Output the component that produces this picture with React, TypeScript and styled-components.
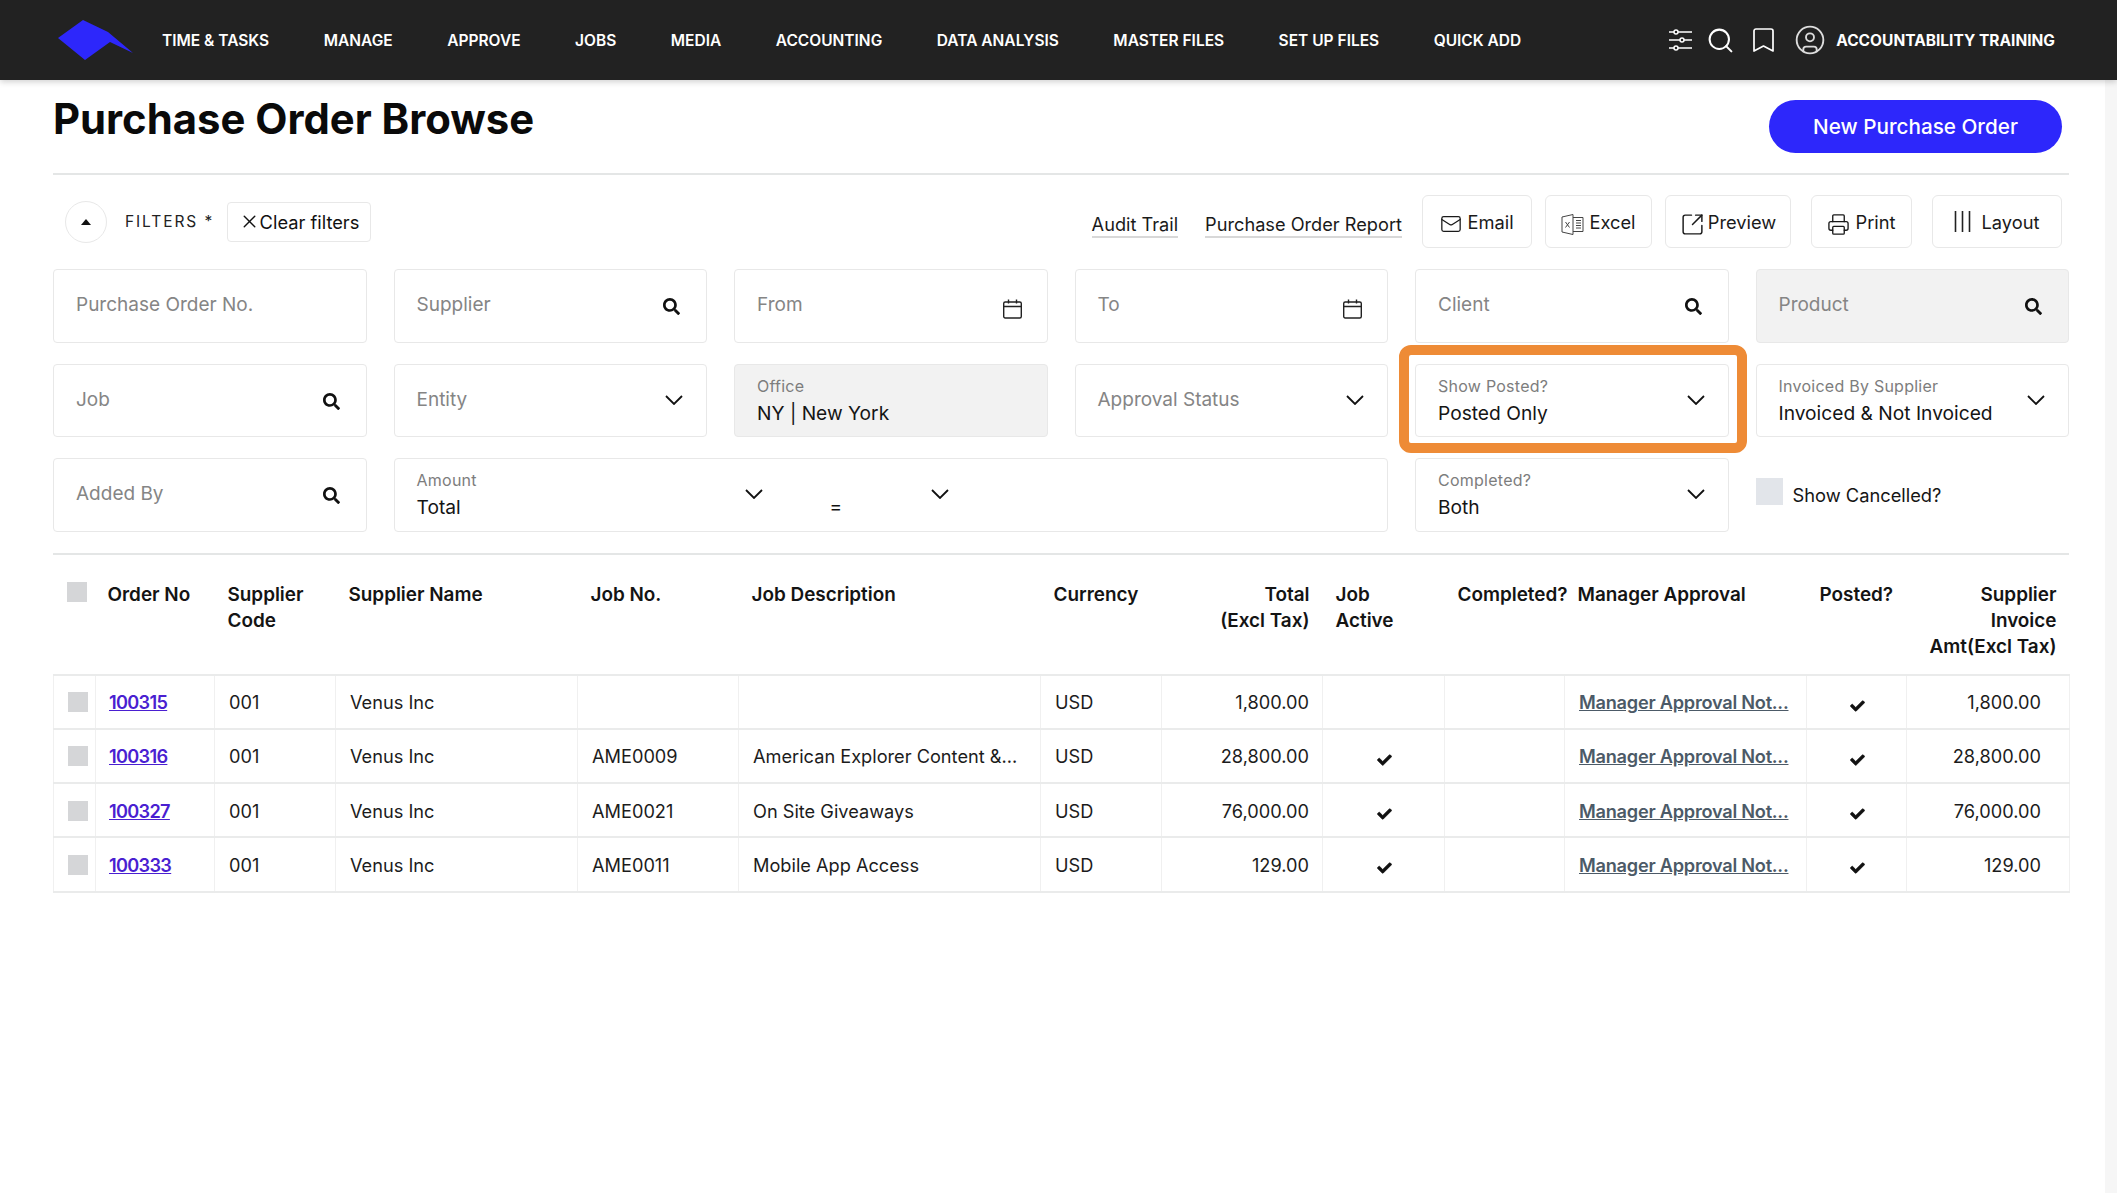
import React from "react";
import { CircleUser, Mail, Printer, Search, SquareArrowOutUpRight, X } from "lucide-react";
import { FaCheck, FaSearch } from "react-icons/fa";
import styled, { createGlobalStyle } from "styled-components";

const NAV_ITEMS = [
  "TIME & TASKS",
  "MANAGE",
  "APPROVE",
  "JOBS",
  "MEDIA",
  "ACCOUNTING",
  "DATA ANALYSIS",
  "MASTER FILES",
  "SET UP FILES",
  "QUICK ADD",
];

const COLUMNS = [
  { width: 42, label: "" },
  { width: 119, label: "Order No" },
  { width: 121, label: "Supplier\nCode" },
  { width: 242, label: "Supplier Name" },
  { width: 161, label: "Job No." },
  { width: 302, label: "Job Description" },
  { width: 121, label: "Currency" },
  { width: 161, label: "Total\n(Excl Tax)", right: true },
  { width: 122, label: "Job\nActive" },
  { width: 120, label: "Completed?" },
  { width: 242, label: "Manager Approval" },
  { width: 100, label: "Posted?" },
  { width: 163, label: "Supplier\nInvoice\nAmt(Excl Tax)", right: true },
];

const ROWS = [
  { no: "100315", job: "", desc: "", total: "1,800.00", active: false },
  { no: "100316", job: "AME0009", desc: "American Explorer Content &...", total: "28,800.00", active: true },
  { no: "100327", job: "AME0021", desc: "On Site Giveaways", total: "76,000.00", active: true },
  { no: "100333", job: "AME0011", desc: "Mobile App Access", total: "129.00", active: true },
];

const GlobalStyle = createGlobalStyle`
  html, body {
    margin: 0;
    padding: 0;
    background: #fff;
    overflow: hidden;
  }
  body {
    font-family: "Inter", "Liberation Sans", sans-serif;
    color: #111;
  }
`;

const Page = styled.div`
  width: 2117px;
  height: 1193px;
  display: flex;
  flex-direction: column;
`;

const TopBar = styled.header`
  height: 80px;
  flex: none;
  display: flex;
  align-items: center;
  padding: 0 62px 0 58px;
  background: #222222;
  box-shadow: 0 2px 6px rgba(0, 0, 0, 0.18);
  position: relative;
  z-index: 2;
`;

const Logo = styled.svg`
  width: 75px;
  height: 40px;
  margin-right: 29px;
  flex: none;
`;

const NavList = styled.nav`
  display: flex;
  gap: 54.5px;
  flex: 1;
`;

const NavItem = styled.a`
  color: #fff;
  font-size: 15.5px;
  font-weight: 600;
  white-space: nowrap;
`;

const NavTools = styled.div`
  display: flex;
  align-items: center;
  color: #fff;
`;

const ToolIcon = styled.span<{ $gap: number }>`
  display: flex;
  margin-right: ${(p) => p.$gap}px;
`;

const UserName = styled.span`
  color: #fff;
  font-size: 15.5px;
  font-weight: 700;
  white-space: nowrap;
`;

const Body = styled.div`
  flex: 1;
  display: flex;
  min-height: 0;
`;

const Main = styled.main`
  flex: 1;
  padding: 0 36px 0 53px;
  min-width: 0;
`;

const Rail = styled.div`
  width: 12px;
  background: #f6f6f6;
`;

const TitleRow = styled.div`
  height: 73px;
  padding: 20px 7px 0 0;
  display: flex;
  justify-content: space-between;
  align-items: flex-start;
  border-bottom: 2px solid #e4e6e6;
`;

const Title = styled.h1`
  margin: 0;
  font-size: 41.8px;
  line-height: 38px;
  font-weight: 700;
  color: #0a0a0a;
`;

const PrimaryButton = styled.button`
  width: 293px;
  height: 53px;
  border: 0;
  border-radius: 27px;
  background: #2d27fb;
  color: #fff;
  font: 500 20.7px "Inter", sans-serif;
`;

const Toolbar = styled.div`
  display: flex;
  align-items: center;
  justify-content: space-between;
  height: 53px;
  margin: 20px 7px 21px 0;
`;

const FilterGroup = styled.div`
  display: flex;
  align-items: center;
  padding-left: 12px;
`;

const CollapseButton = styled.span`
  width: 42px;
  height: 42px;
  box-sizing: border-box;
  border: 1px solid #e8e8e8;
  border-radius: 50%;
  display: flex;
  align-items: center;
  justify-content: center;
  margin-right: 18px;
  &::before {
    content: "";
    border-left: 5px solid transparent;
    border-right: 5px solid transparent;
    border-bottom: 6px solid #111;
  }
`;

const FiltersLabel = styled.span`
  width: 102px;
  font-size: 15.5px;
  letter-spacing: 1.9px;
  color: #222;
  white-space: nowrap;
`;

const ClearButton = styled.span`
  height: 40px;
  width: 144px;
  box-sizing: border-box;
  border: 1px solid #e8e8e8;
  border-radius: 4px;
  display: flex;
  align-items: center;
  justify-content: center;
  font-size: 18.3px;
  white-space: nowrap;
`;

const Actions = styled.div`
  display: flex;
  align-items: center;
`;

const TextLink = styled.a<{ $gap: number }>`
  font-size: 18.2px;
  line-height: 24px;
  border-bottom: 2px solid #d8d8d8;
  margin: 6px ${(p) => p.$gap}px 0 0;
  white-space: nowrap;
  color: #1a1a1a;
`;

const ActionButton = styled.span<{ $width: number; $gap: number; $iconGap?: number }>`
  width: ${(p) => p.$width}px;
  margin-right: ${(p) => p.$gap}px;
  height: 53px;
  box-sizing: border-box;
  border: 1px solid #e8e8e8;
  border-radius: 6px;
  display: flex;
  align-items: center;
  justify-content: center;
  gap: ${(p) => p.$iconGap ?? 5}px;
  font-size: 18.3px;
  color: #1a1a1a;
`;

const ActionIcon = styled.span`
  display: flex;
  margin-top: 5px;
`;

const FilterGrid = styled.div`
  display: grid;
  grid-template-columns: repeat(6, 313.5px);
  column-gap: 27px;
  grid-auto-rows: 73.5px;
  row-gap: 21px;
`;

const Field = styled.div<{ $grey?: boolean; $span?: number }>`
  position: relative;
  box-sizing: border-box;
  border: 1px solid #e8e8e8;
  border-radius: 4px;
  padding: 0 22px;
  background: ${(p) => (p.$grey ? "#f2f2f2" : "#fff")};
  grid-column: ${(p) => (p.$span ? `span ${p.$span}` : "auto")};
  display: flex;
  align-items: flex-start;
  justify-content: space-between;
`;

const Placeholder = styled.span`
  font-size: 19px;
  line-height: 24px;
  margin-top: 23px;
  color: #858585;
  white-space: nowrap;
`;

const FieldText = styled.span`
  display: flex;
  flex-direction: column;
  padding-top: 12px;
`;

const FieldLabel = styled.span`
  font-size: 16px;
  line-height: 18px;
  letter-spacing: 0.25px;
  color: #7d7d7d;
  white-space: nowrap;
`;

const FieldValue = styled.span`
  font-size: 19.2px;
  line-height: 24px;
  margin-top: 6px;
  color: #151515;
  white-space: nowrap;
`;

const FieldIcon = styled.span<{ $kind: "search" | "calendar" | "chevron" }>`
  display: flex;
  flex: none;
  color: #111;
  margin-top: ${(p) => (p.$kind === "chevron" ? 30 : p.$kind === "search" ? 28 : 29)}px;
  margin-right: ${(p) => (p.$kind === "search" ? 4 : p.$kind === "calendar" ? 3 : 1)}px;
`;

const AmountGroup = styled.div`
  display: flex;
  align-items: flex-start;
`;

const AmountMain = styled.div`
  width: 347px;
  display: flex;
  justify-content: space-between;
`;

const AmountOp = styled.div`
  display: flex;
  justify-content: space-between;
  width: 120px;
  margin-left: 66px;
`;

const OpValue = styled.span`
  font-size: 19px;
  line-height: 24px;
  margin-top: 36px;
`;

const Highlight = styled.span`
  position: absolute;
  top: -20px;
  bottom: -17px;
  left: -17px;
  right: -19px;
  border: 10px solid #ee8b36;
  border-radius: 12px;
  pointer-events: none;
`;

const CheckField = styled.label`
  display: flex;
  align-items: center;
  font-size: 18.3px;
  color: #151515;
  gap: 10px;
  height: 74px;
`;

const CheckBox = styled.span<{ $color?: string; $size?: number; $lift?: number }>`
  display: block;
  flex: none;
  width: ${(p) => p.$size ?? 20}px;
  height: ${(p) => p.$size ?? 20}px;
  margin-top: ${(p) => -(p.$lift ?? 0)}px;
  background: ${(p) => p.$color ?? "#d5d6d8"};
`;

const Divider = styled.div`
  height: 2px;
  background: #e4e6e6;
  margin-top: 21px;
`;

const Table = styled.table`
  table-layout: fixed;
  width: 2016px;
  border-collapse: collapse;
`;

const HeadCell = styled.th<{ $right?: boolean }>`
  height: 120px;
  box-sizing: border-box;
  padding: 27px 13px 0 13px;
  vertical-align: top;
  text-align: ${(p) => (p.$right ? "right" : "left")};
  font-size: 18.9px;
  line-height: 26px;
  font-weight: 600;
  color: #141414;
  white-space: pre-line;
  &:nth-child(2) {
    padding-left: 12px;
    padding-right: 0;
  }
  &:nth-child(10) {
    padding-right: 0;
    white-space: nowrap;
  }
  &:nth-child(11) {
    white-space: nowrap;
  }
`;

const Row = styled.tr`
  height: 54.25px;
`;

const Cell = styled.td<{ $right?: boolean; $center?: boolean; $inset?: number; $start?: number }>`
  box-sizing: border-box;
  border: 1px solid #f0f0f0;
  border-top: 2px solid #eaebeb;
  border-bottom: 2px solid #eaebeb;
  padding: 1px ${(p) => p.$inset ?? 13}px 0 ${(p) => p.$start ?? 14}px;
  font-size: 18.2px;
  color: #1c1c1c;
  text-align: ${(p) => (p.$right ? "right" : p.$center ? "center" : "left")};
  white-space: nowrap;
`;

const OrderLink = styled.a`
  color: #4a1fd1;
  font-weight: 600;
  letter-spacing: -0.7px;
  text-decoration: underline;
`;

const ApprovalLink = styled.a`
  color: #4c5a67;
  font-weight: 600;
  letter-spacing: -0.25px;
  text-decoration: underline;
`;

const Tick = styled(FaCheck)`
  display: block;
  margin: 7px auto 0;
  width: 15px;
  height: 14px;
  color: #111;
  stroke: #111;
  stroke-width: 30px;
`;

const SlidersIcon = () => (
  <svg width="23" height="22" viewBox="0 0 23 22" fill="none" stroke="#fff" strokeWidth="1.5">
    <path d="M0 3h5M9 3h14M0 11h11M15 11h8M0 19h5M9 19h14" />
    <circle cx="7" cy="3" r="2" />
    <circle cx="13" cy="11" r="2" />
    <circle cx="7" cy="19" r="2" />
  </svg>
);

const BookmarkIcon = () => (
  <svg width="21" height="24" viewBox="0 0 21 24" fill="none" stroke="#fff" strokeWidth="1.7" strokeLinejoin="round">
    <path d="M3 1h15a2 2 0 0 1 2 2v20l-9.5-5L1 23V3a2 2 0 0 1 2-2z" />
  </svg>
);

const CalendarIcon = () => (
  <svg width="19" height="20" viewBox="0 0 19 20" fill="none" stroke="#222" strokeWidth="1.4">
    <rect x="0.7" y="3" width="17.6" height="16" rx="1.5" />
    <path d="M0.7 7.5h17.6M5.5 0.5v4M13.5 0.5v4" />
  </svg>
);

const ExcelIcon = () => (
  <svg width="23" height="21" viewBox="0 0 23 21" fill="none" stroke="#444" strokeWidth="1">
    <path d="M1 3l11-2.5v20L1 18z" />
    <path d="M12 3.5h10v14H12M15 6.5h5M15 9h5M15 11.5h5M15 14h5" />
    <path d="M4.5 8l4 5.5M8.5 8l-4 5.5" />
  </svg>
);

const LayoutIcon = () => (
  <svg width="17" height="21" viewBox="0 0 17 21" stroke="#222" strokeWidth="1.6">
    <path d="M1.5 0v21M8.5 0v21M15.5 0v21" />
  </svg>
);

const ChevronIcon = () => (
  <svg width="18" height="10" viewBox="0 0 18 10" fill="none" stroke="#111" strokeWidth="1.8">
    <path d="M1 1l8 8 8-8" />
  </svg>
);

const SearchField = () => (
  <FieldIcon $kind="search">
    <FaSearch size={17} />
  </FieldIcon>
);

const CalendarField = () => (
  <FieldIcon $kind="calendar">
    <CalendarIcon />
  </FieldIcon>
);

const ChevronField = () => (
  <FieldIcon $kind="chevron">
    <ChevronIcon />
  </FieldIcon>
);

const App = () => {
  return (
    <Page>
      <GlobalStyle />
      <TopBar>
        <Logo viewBox="0 0 75 40">
          <polygon points="0,18 25,0 50,12 75,33 52,22 27,40" fill="#2d27fb" />
        </Logo>
        <NavList>
          {NAV_ITEMS.map((item) => (
            <NavItem key={item}>{item}</NavItem>
          ))}
        </NavList>
        <NavTools>
          <ToolIcon $gap={14}>
            <SlidersIcon />
          </ToolIcon>
          <ToolIcon $gap={18}>
            <Search size={29} strokeWidth={1.7} />
          </ToolIcon>
          <ToolIcon $gap={20}>
            <BookmarkIcon />
          </ToolIcon>
          <ToolIcon $gap={10}>
            <CircleUser size={32} strokeWidth={1.4} color="#dddddd" />
          </ToolIcon>
          <UserName>ACCOUNTABILITY TRAINING</UserName>
        </NavTools>
      </TopBar>
      <Body>
        <Main>
          <TitleRow>
            <Title>Purchase Order Browse</Title>
            <PrimaryButton>New Purchase Order</PrimaryButton>
          </TitleRow>
          <Toolbar>
            <FilterGroup>
              <CollapseButton />
              <FiltersLabel>FILTERS *</FiltersLabel>
              <ClearButton>
                <X size={21} strokeWidth={1.6} />
                Clear filters
              </ClearButton>
            </FilterGroup>
            <Actions>
              <TextLink $gap={27}>Audit Trail</TextLink>
              <TextLink $gap={20}>Purchase Order Report</TextLink>
              <ActionButton $width={110} $gap={13}>
                <ActionIcon>
                  <Mail size={22} strokeWidth={1.4} />
                </ActionIcon>
                Email
              </ActionButton>
              <ActionButton $width={107} $gap={13}>
                <ActionIcon>
                  <ExcelIcon />
                </ActionIcon>
                Excel
              </ActionButton>
              <ActionButton $width={126} $gap={20} $iconGap={3}>
                <ActionIcon>
                  <SquareArrowOutUpRight size={25} strokeWidth={1.4} />
                </ActionIcon>
                Preview
              </ActionButton>
              <ActionButton $width={101} $gap={20}>
                <ActionIcon>
                  <Printer size={23} strokeWidth={1.4} />
                </ActionIcon>
                Print
              </ActionButton>
              <ActionButton $width={130} $gap={0} $iconGap={10}>
                <LayoutIcon />
                Layout
              </ActionButton>
            </Actions>
          </Toolbar>
          <FilterGrid>
            <Field>
              <Placeholder>Purchase Order No.</Placeholder>
            </Field>
            <Field>
              <Placeholder>Supplier</Placeholder>
              <SearchField />
            </Field>
            <Field>
              <Placeholder>From</Placeholder>
              <CalendarField />
            </Field>
            <Field>
              <Placeholder>To</Placeholder>
              <CalendarField />
            </Field>
            <Field>
              <Placeholder>Client</Placeholder>
              <SearchField />
            </Field>
            <Field $grey>
              <Placeholder>Product</Placeholder>
              <SearchField />
            </Field>

            <Field>
              <Placeholder>Job</Placeholder>
              <SearchField />
            </Field>
            <Field>
              <Placeholder>Entity</Placeholder>
              <ChevronField />
            </Field>
            <Field $grey>
              <FieldText>
                <FieldLabel>Office</FieldLabel>
                <FieldValue>NY | New York</FieldValue>
              </FieldText>
            </Field>
            <Field>
              <Placeholder>Approval Status</Placeholder>
              <ChevronField />
            </Field>
            <Field>
              <FieldText>
                <FieldLabel>Show Posted?</FieldLabel>
                <FieldValue>Posted Only</FieldValue>
              </FieldText>
              <ChevronField />
              <Highlight />
            </Field>
            <Field>
              <FieldText>
                <FieldLabel>Invoiced By Supplier</FieldLabel>
                <FieldValue>Invoiced &amp; Not Invoiced</FieldValue>
              </FieldText>
              <ChevronField />
            </Field>

            <Field>
              <Placeholder>Added By</Placeholder>
              <SearchField />
            </Field>
            <Field $span={3}>
              <AmountGroup>
                <AmountMain>
                  <FieldText>
                    <FieldLabel>Amount</FieldLabel>
                    <FieldValue>Total</FieldValue>
                  </FieldText>
                  <ChevronField />
                </AmountMain>
                <AmountOp>
                  <OpValue>=</OpValue>
                  <ChevronField />
                </AmountOp>
              </AmountGroup>
            </Field>
            <Field>
              <FieldText>
                <FieldLabel>Completed?</FieldLabel>
                <FieldValue>Both</FieldValue>
              </FieldText>
              <ChevronField />
            </Field>
            <CheckField>
              <CheckBox $color="#e2e5ea" $size={27} $lift={7} />
              Show Cancelled?
            </CheckField>
          </FilterGrid>
          <Divider />
          <Table>
            <colgroup>
              {COLUMNS.map((c, i) => (
                <col key={i} style={{ width: c.width }} />
              ))}
            </colgroup>
            <thead>
              <tr>
                {COLUMNS.map((c, i) => (
                  <HeadCell key={i} $right={c.right}>
                    {i === 0 ? <CheckBox /> : c.label}
                  </HeadCell>
                ))}
              </tr>
            </thead>
            <tbody>
              {ROWS.map((r) => (
                <Row key={r.no}>
                  <Cell>
                    <CheckBox />
                  </Cell>
                  <Cell $start={13}>
                    <OrderLink>{r.no}</OrderLink>
                  </Cell>
                  <Cell>001</Cell>
                  <Cell>Venus Inc</Cell>
                  <Cell>{r.job}</Cell>
                  <Cell>{r.desc}</Cell>
                  <Cell>USD</Cell>
                  <Cell $right>{r.total}</Cell>
                  <Cell $center>{r.active && <Tick />}</Cell>
                  <Cell />
                  <Cell>
                    <ApprovalLink>Manager Approval Not...</ApprovalLink>
                  </Cell>
                  <Cell $center>
                    <Tick />
                  </Cell>
                  <Cell $right $inset={28}>
                    {r.total}
                  </Cell>
                </Row>
              ))}
            </tbody>
          </Table>
        </Main>
        <Rail />
      </Body>
    </Page>
  );
};

export default App;
